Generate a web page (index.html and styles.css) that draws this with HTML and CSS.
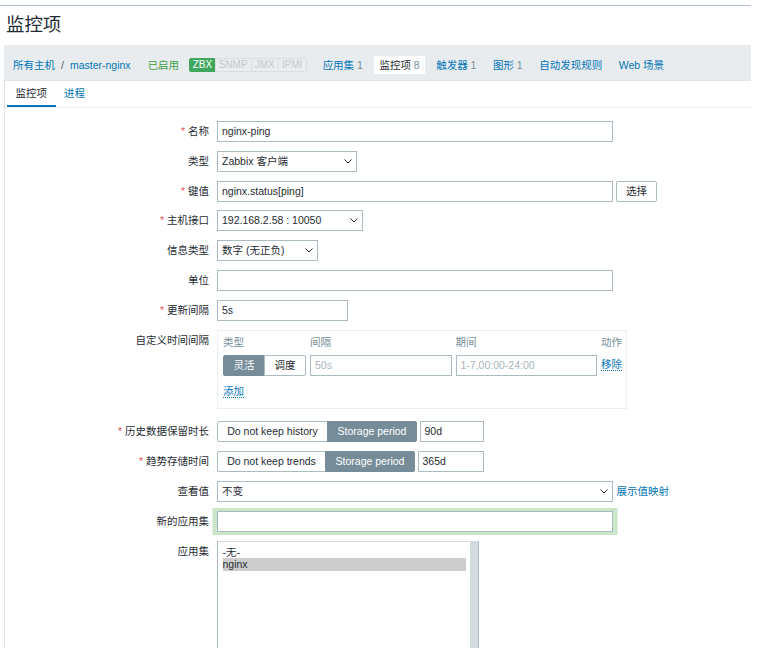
FILE: index.html
```html
<!DOCTYPE html>
<html lang="zh-CN">
<head>
<meta charset="utf-8">
<title>监控项</title>
<link rel="stylesheet" href="styles.css">
</head>
<body>
<div class="topline"></div>
<h1 class="title">监控项</h1>
<div class="page">
  <nav class="hostnav">
    <div class="crumbs"><a class="link">所有主机</a><span class="sep">/</span><a class="link">master-nginx</a></div>
    <span class="status">已启用</span>
    <div class="badges"><span class="badge on b-zbx">ZBX</span><span class="badge b-snmp">SNMP</span><span class="badge b-jmx">JMX</span><span class="badge b-ipmi">IPMI</span></div>
    <ul class="navlist">
      <li><a class="link">应用集</a> <span class="count">1</span></li>
      <li class="selected">监控项 <span class="count">8</span></li>
      <li><a class="link">触发器</a> <span class="count">1</span></li>
      <li><a class="link">图形</a> <span class="count">1</span></li>
      <li><a class="link">自动发现规则</a></li>
      <li><a class="link">Web 场景</a></li>
    </ul>
  </nav>
  <div class="panel">
    <ul class="tabs">
      <li class="tab active">监控项</li>
      <li class="tab"><a class="link">进程</a></li>
    </ul>
    <div class="form">
      <label class="lbl"><span class="req">*</span>名称</label>
      <div class="field"><div class="input w-wide">nginx-ping</div></div>

      <label class="lbl">类型</label>
      <div class="field"><div class="input select w-type">Zabbix 客户端<svg class="chev" width="8" height="5" viewBox="0 0 8 5"><polyline points="0.5,0.5 4,4 7.5,0.5"/></svg></div></div>

      <label class="lbl"><span class="req">*</span>键值</label>
      <div class="field"><div class="input w-wide">nginx.status[ping]</div><div class="btn">选择</div></div>

      <label class="lbl"><span class="req">*</span>主机接口</label>
      <div class="field"><div class="input select w-iface">192.168.2.58 : 10050<svg class="chev" width="8" height="5" viewBox="0 0 8 5"><polyline points="0.5,0.5 4,4 7.5,0.5"/></svg></div></div>

      <label class="lbl">信息类型</label>
      <div class="field"><div class="input select w-info">数字 (无正负)<svg class="chev" width="8" height="5" viewBox="0 0 8 5"><polyline points="0.5,0.5 4,4 7.5,0.5"/></svg></div></div>

      <label class="lbl">单位</label>
      <div class="field"><div class="input w-wide"></div></div>

      <label class="lbl"><span class="req">*</span>更新间隔</label>
      <div class="field"><div class="input w-delay">5s</div></div>

      <label class="lbl">自定义时间间隔</label>
      <div class="field">
        <div class="intervals">
          <div class="ihead">类型</div>
          <div class="ihead">间隔</div>
          <div class="ihead">期间</div>
          <div class="ihead">动作</div>
          <div class="seg">
            <span class="seg-btn active w-flex">灵活</span><span class="seg-btn w-flex">调度</span>
          </div>
          <div class="input ph">50s</div>
          <div class="input ph">1-7,00:00-24:00</div>
          <div class="act"><a class="link dotted">移除</a></div>
          <div class="add"><a class="link dotted">添加</a></div>
        </div>
      </div>

      <label class="lbl"><span class="req">*</span>历史数据保留时长</label>
      <div class="field">
        <div class="seg"><span class="seg-btn w-hist">Do not keep history</span><span class="seg-btn active w-store">Storage period</span></div>
        <div class="input w-90d">90d</div>
      </div>

      <label class="lbl"><span class="req">*</span>趋势存储时间</label>
      <div class="field">
        <div class="seg"><span class="seg-btn w-trend">Do not keep trends</span><span class="seg-btn active w-store">Storage period</span></div>
        <div class="input w-365d">365d</div>
      </div>

      <label class="lbl">查看值</label>
      <div class="field"><div class="input select w-wide">不变<svg class="chev" width="8" height="5" viewBox="0 0 8 5"><polyline points="0.5,0.5 4,4 7.5,0.5"/></svg></div><a class="link map">展示值映射</a></div>

      <label class="lbl">新的应用集</label>
      <div class="field"><div class="input w-wide focus"></div></div>

      <label class="lbl top">应用集</label>
      <div class="field top">
        <div class="listbox">
          <div class="options">
            <div class="opt">-无-</div>
            <div class="opt sel">nginx</div>
          </div>
          <div class="scroll"></div>
        </div>
      </div>
    </div>
  </div>
</div>
</body>
</html>
```

FILE: styles.css
```css
* { box-sizing: border-box; }
html, body { margin: 0; padding: 0; background: #fff; }
body {
  font-family: "Liberation Sans", "Noto Sans CJK SC", sans-serif;
  font-size: 10.5px;
  color: #1f2c33;
  line-height: 1.2;
}
.topline { margin-top: 5px; height: 1px; width: 751px; background: #b4bfd9; }
.title {
  margin: 7px 0 8px 6px;
  font-size: 18.4px;
  font-weight: normal;
  line-height: 24px;
  color: #1f2c33;
}
.page { margin-left: 4px; width: 747px; }
.link { color: #0275b8; text-decoration: none; cursor: pointer; }
.dotted { border-bottom: 1px dotted #0275b8; }

.hostnav {
  display: flex;
  align-items: center;
  height: 36px;
  padding: 5px 0 0 9px;
  background: #e9ecef;
  border-bottom: 1px solid #dfe4e7;
  white-space: nowrap;
}
.crumbs { margin-right: 17px; }
.sep { margin: 0 6px; color: #4f5b62; }
.status { color: #429e47; margin-right: 10px; }
.badges { display: flex; margin-right: 11px; }
.badge {
  height: 14px;
  line-height: 12px;
  border: 1px solid #d9dee2;
  margin-left: -1px;
  color: #c3cacf;
  background: #eaedf0;
  text-align: center;
  font-size: 10px;
}
.b-zbx { width: 26.5px; }
.b-snmp { width: 37px; }
.b-jmx { width: 28px; }
.b-ipmi { width: 29px; }
.badge:first-child { margin-left: 0; border-radius: 2px 0 0 2px; }
.badge:last-child { border-radius: 0 2px 2px 0; }
.badge.on { background: #3fa85e; border-color: #3fa85e; color: #fff; }
.navlist { display: flex; gap: 6.5px; margin: 0; padding: 0; list-style: none; }
.navlist li { padding: 0 5px; height: 18px; line-height: 18px; }
.navlist li.selected { background: #fff; color: #1f2c33; }
.count { color: #768d99; }

.panel { border-left: 1px solid #dfe4e7; min-height: 560px; }
.tabs {
  display: flex;
  margin: 0;
  padding: 0 0 0 2px;
  list-style: none;
  border-bottom: 1px solid #ebeef0;
}
.tab {
  height: 26px;
  padding: 1px 8.5px 0;
  line-height: 23px;
  border-bottom: 2px solid transparent;
}
.tab.active { border-bottom-color: #0275b8; color: #1f2c33; }

.form {
  display: grid;
  grid-template-columns: 204px 1fr;
  column-gap: 8px;
  row-gap: 8.8px;
  padding: 13px 0 20px;
}
.lbl { text-align: right; line-height: 21px; white-space: nowrap; }
.req { color: #e45959; margin-right: 3px; }
.field { display: flex; align-items: flex-start; }

.input {
  height: 21px;
  border: 1px solid #acbbc2;
  padding: 0 4px;
  line-height: 19px;
  background: #fff;
  white-space: nowrap;
  overflow: hidden;
}
.select { display: flex; justify-content: space-between; align-items: center; padding-right: 4px; }
.chev { flex: none; }
.chev polyline { fill: none; stroke: #1f2c33; stroke-width: 1; }
.ph { color: #a9b5bc; }
.w-wide { width: 396px; }
.w-type { width: 139.5px; }
.w-iface { width: 146px; }
.w-info { width: 101px; }
.w-delay { width: 131px; }
.w-90d { width: 64.5px; margin-left: 2.5px; }
.w-365d { width: 66px; margin-left: 2.5px; }

.btn {
  width: 41px;
  height: 21px;
  margin-left: 3px;
  border: 1px solid #acbbc2;
  border-radius: 2px;
  line-height: 19px;
  text-align: center;
  background: #fff;
}

.intervals {
  width: 410px;
  border: 1px solid #ebeef0;
  padding: 4px 4px 9px 5px;
  margin-bottom: 4px;
  display: grid;
  grid-template-columns: 83px 141.5px 141.5px 1fr;
  column-gap: 4px;
  row-gap: 5px;
  white-space: nowrap;
}
.ihead { line-height: 15px; color: #768d99; }
.act { line-height: 19px; }
.add { grid-column: 1 / -1; margin-top: 3px; line-height: 15px; }

.seg { display: flex; }
.seg-btn {
  height: 21px;
  line-height: 19px;
  border: 1px solid #acbbc2;
  background: #fff;
  text-align: center;
  white-space: nowrap;
  color: #1f2c33;
}
.seg-btn + .seg-btn { margin-left: -1px; }
.seg-btn:first-child { border-radius: 2px 0 0 2px; }
.seg-btn:last-child { border-radius: 0 2px 2px 0; }
.seg-btn.active { background: #768d99; border-color: #768d99; color: #fff; }
.w-flex { width: 42px; }
.w-hist { width: 111px; }
.w-trend { width: 109px; }
.w-store { width: 90px; }

.map { margin-left: 3.5px; line-height: 21px; }
.focus { box-shadow: 0 0 0 3px #c9e6c9, -1.5px 0 0 3px #c9e6c9, 1.5px 0 0 3px #c9e6c9; }

.listbox {
  width: 262px;
  height: 118px;
  border: 1px solid #acbbc2;
  border-top-color: #d5dde1;
  display: flex;
  background: #fff;
}
.options { flex: 1; padding: 4px 3.5px 0 4.5px; }
.opt { line-height: 12.7px; height: 12.7px; white-space: nowrap; }
.opt.sel { background: #cdcdcd; }
.scroll { width: 8.5px; background: #d3dbdf; }
```
